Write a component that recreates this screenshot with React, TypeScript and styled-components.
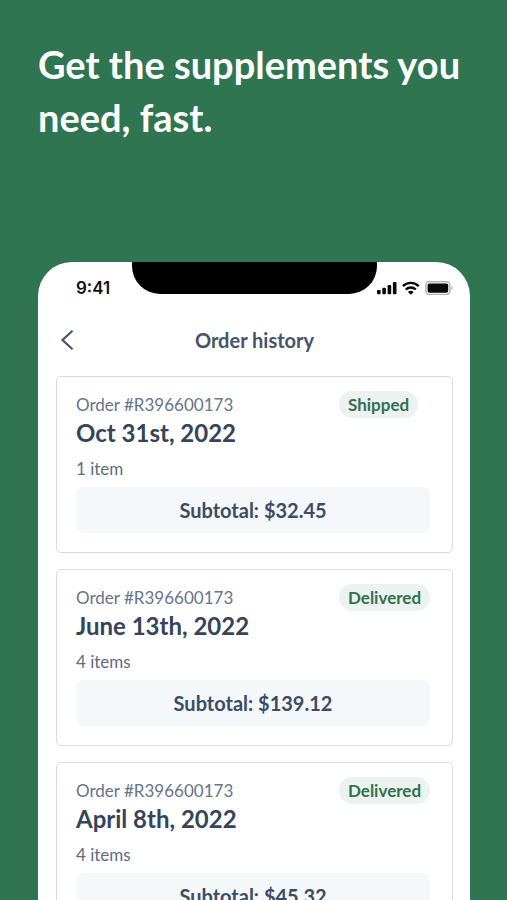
import React from "react";
import styled, { createGlobalStyle } from "styled-components";

const GlobalStyle = createGlobalStyle`
  * { box-sizing: border-box; }
  body {
    margin: 0;
    background: #307552;
    font-family: Lato, "Open Sans", sans-serif;
  }
`;

const Page = styled.main`
  display: flex;
  flex-direction: column;
  height: 100vh;
  overflow: hidden;
  padding: 0 37px 0 38px;
  background: #307552;
`;

const Headline = styled.h1`
  flex: none;
  margin: 0;
  padding-top: 38px;
  min-height: 262px;
  color: #fff;
  font-size: 38px;
  line-height: 53px;
  font-weight: 700;
`;

const Phone = styled.section`
  flex: none;
  padding: 0 17px 24px 18px;
  border-radius: 34px 34px 0 0;
  background: #fff;
`;

const StatusBar = styled.div`
  display: grid;
  grid-template-columns: 76px 1fr 76px;
  height: 52px;
`;

const Clock = styled.time`
  padding: 16px 0 0 20px;
  color: #111;
  font-family: Inter, sans-serif;
  font-size: 17px;
  line-height: 20px;
  font-weight: 600;
`;

const Notch = styled.div`
  height: 32px;
  border-radius: 0 0 28px 28px;
  background: #000;
`;

const StatusIcons = styled.svg`
  display: block;
  width: 78px;
  height: 14px;
  margin-top: 19px;
`;

const TitleBar = styled.header`
  display: grid;
  grid-template-columns: 22px 1fr 22px;
  align-items: center;
  height: 52px;
  margin-bottom: 10px;
`;

const BackButton = styled.button`
  display: flex;
  justify-content: center;
  padding: 0;
  border: 0;
  background: none;
  color: #47546c;
`;

const Title = styled.h2`
  margin: 0;
  color: #45536b;
  font-size: 20px;
  line-height: 26px;
  font-weight: 700;
  text-align: center;
`;

const Orders = styled.ul`
  display: grid;
  gap: 16px;
  margin: 0;
  padding: 0;
  list-style: none;
`;

const Card = styled.li`
  padding: 14px 22px 19px 19px;
  border: 1px solid #d9dce6;
  border-radius: 5px;
`;

const CardTop = styled.div`
  display: grid;
  grid-template-columns: 1fr 91px;
  align-items: center;
  justify-items: start;
`;

const OrderNumber = styled.span`
  color: #67748b;
  font-size: 17px;
  line-height: 22px;
`;

const Badge = styled.span`
  padding: 0 9px;
  border-radius: 14px;
  background: #ebf2ef;
  color: #34704f;
  font-size: 17px;
  line-height: 27px;
  font-weight: 700;
`;

const OrderDate = styled.h3`
  margin: 0 0 10px;
  color: #35445b;
  font-size: 24px;
  line-height: 30px;
  font-weight: 700;
`;

const ItemCount = styled.p`
  margin: 0 0 7px;
  color: #5f6c83;
  font-size: 17px;
  line-height: 22px;
`;

const Subtotal = styled.p`
  margin: 0;
  border-radius: 8px;
  background: #f4f8fb;
  color: #3d4b63;
  font-size: 20px;
  line-height: 46px;
  font-weight: 700;
  text-align: center;
`;

const orders = [
  { number: "R396600173", status: "Shipped", date: "Oct 31st, 2022", items: "1 item", subtotal: "$32.45" },
  { number: "R396600173", status: "Delivered", date: "June 13th, 2022", items: "4 items", subtotal: "$139.12" },
  { number: "R396600173", status: "Delivered", date: "April 8th, 2022", items: "4 items", subtotal: "$45.32" },
];

function DeviceStatus() {
  return (
    <StatusIcons viewBox="0 0 78 14" role="img" aria-label="Signal, Wi-Fi and battery">
      <g fill="#080808">
        <rect x="0" y="9" width="3.6" height="4.2" rx="1" />
        <rect x="5.3" y="6.8" width="3.6" height="6.4" rx="1" />
        <rect x="10.6" y="4" width="3.6" height="9.2" rx="1" />
        <rect x="15.9" y="1" width="3.6" height="12.2" rx="1" />
      </g>
      <g fill="none" stroke="#080808" strokeWidth="2.4">
        <path d="M25.9 5.1a11.3 11.3 0 0 1 15.8 0" />
        <path d="M28.8 8.5a7.2 7.2 0 0 1 10 0" />
      </g>
      <path d="M30.9 10.9a4.4 4.4 0 0 1 5.8 0L33.8 13.7Z" fill="#080808" />
      <rect x="48.9" y="0.8" width="24" height="12.6" rx="3.6" fill="none" stroke="#b4b4b4" strokeWidth="1.5" />
      <rect x="50.6" y="2.4" width="20.6" height="9.4" rx="1.8" fill="#080808" />
      <path d="M74.4 5a2.3 2.3 0 0 1 0 4.2Z" fill="#b4b4b4" />
    </StatusIcons>
  );
}

export default function App() {
  return (
    <>
      <GlobalStyle />
      <Page>
        <Headline>Get the supplements you need, fast.</Headline>
        <Phone>
          <StatusBar>
            <Clock>9:41</Clock>
            <Notch />
            <DeviceStatus />
          </StatusBar>
          <TitleBar>
            <BackButton type="button" aria-label="Back">
              <svg width="14" height="22" viewBox="0 0 14 22" fill="none" stroke="currentColor" strokeWidth="2.2">
                <path d="M12.5 1.8 2.5 11 12.5 20.2" />
              </svg>
            </BackButton>
            <Title>Order history</Title>
          </TitleBar>
          <Orders>
            {orders.map((order) => (
              <Card key={order.date}>
                <CardTop>
                  <OrderNumber>Order #{order.number}</OrderNumber>
                  <Badge>{order.status}</Badge>
                </CardTop>
                <OrderDate>{order.date}</OrderDate>
                <ItemCount>{order.items}</ItemCount>
                <Subtotal>Subtotal: {order.subtotal}</Subtotal>
              </Card>
            ))}
          </Orders>
        </Phone>
      </Page>
    </>
  );
}
